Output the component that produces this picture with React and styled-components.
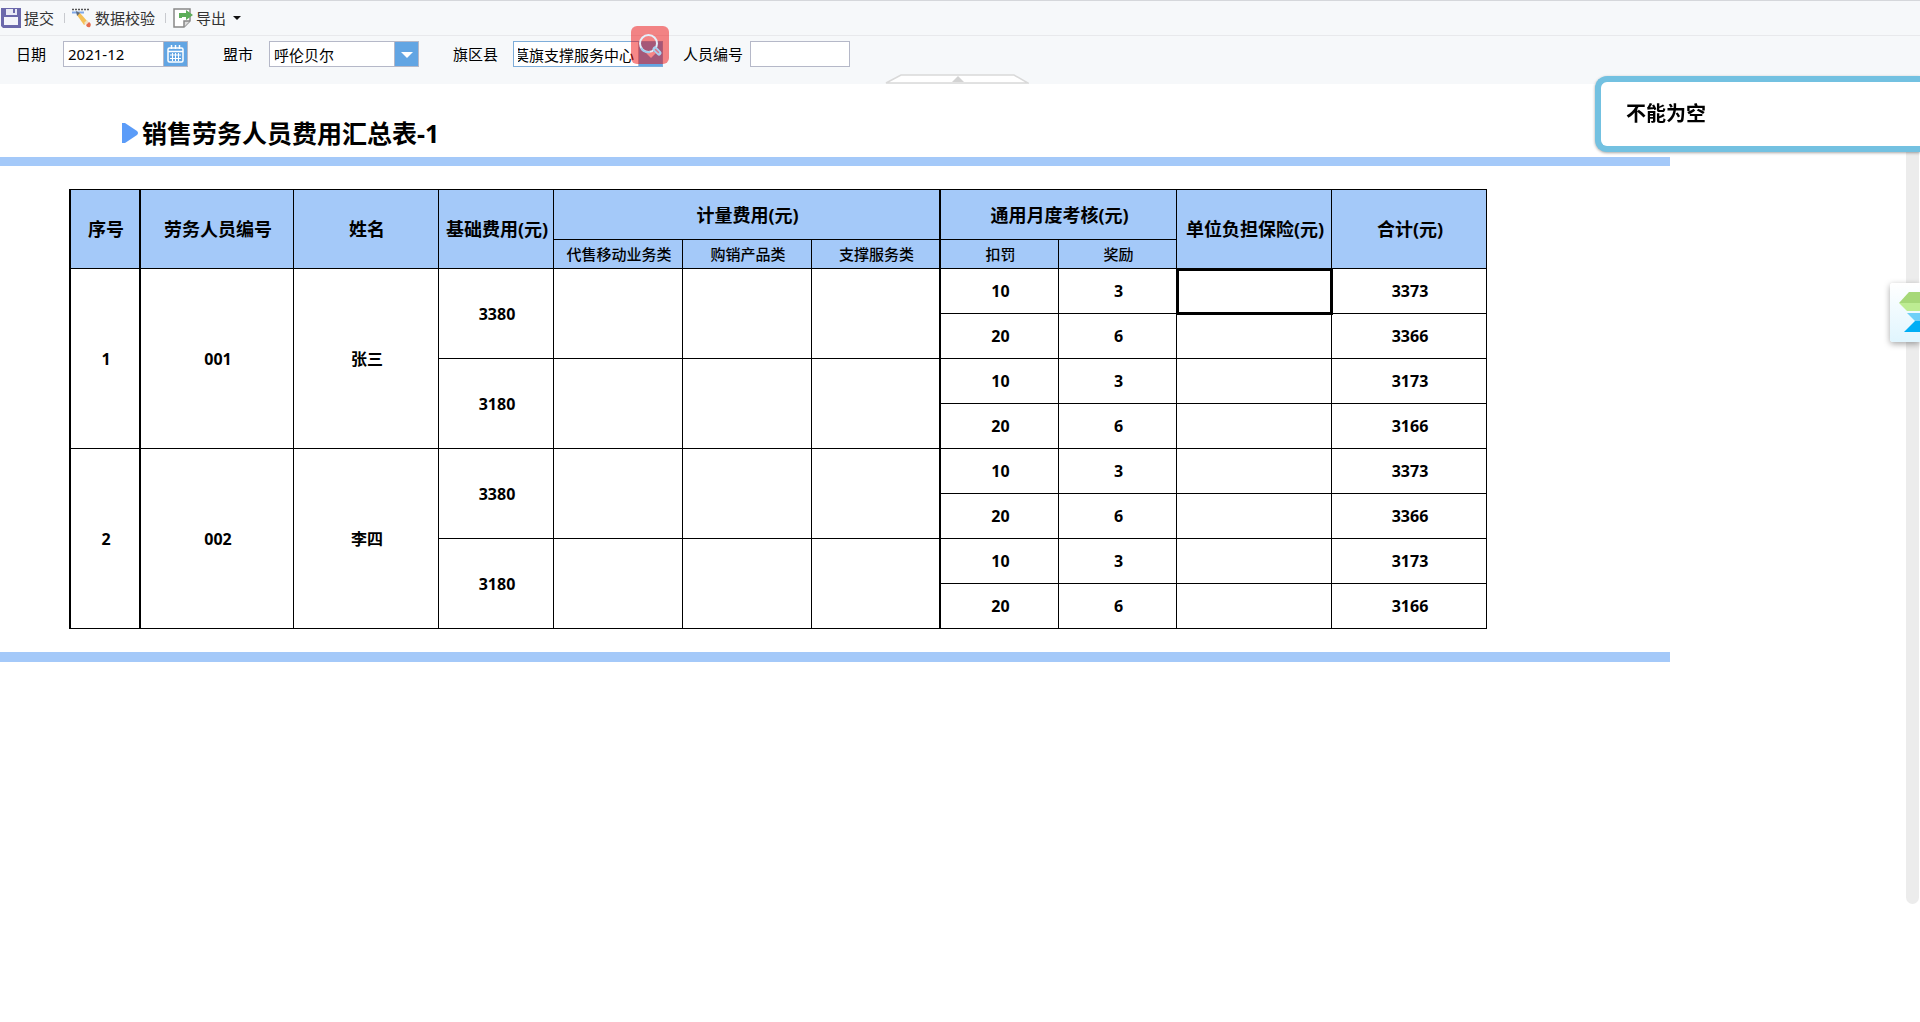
import React, { useEffect, useRef, useState } from 'react';
import styled, { createGlobalStyle } from 'styled-components';

const GlobalStyle = createGlobalStyle`
  * {
    box-sizing: border-box;
  }

  body {
    margin: 0;
    background: #fff;
    color: #000;
    font-family: 'Noto Sans', 'Noto Sans CJK SC', sans-serif;
    font-size: 15px;
    overflow: hidden;
  }

  button,
  input {
    font: inherit;
    color: inherit;
  }
`;

const Page = styled.div`
  display: flex;
  flex-direction: column;
  min-height: 100vh;
`;

const Toolbar = styled.div`
  display: flex;
  align-items: center;
  height: 36px;
  background: #f6f8fa;
  border-top: 1px solid #d5d7db;
  border-bottom: 1px solid #e8e9ec;
`;

const ToolButton = styled.button`
  display: flex;
  align-items: center;
  gap: 3px;
  padding: 0 10px 0 1px;
  border: none;
  background: none;
  color: #333;
  line-height: 20px;
  cursor: pointer;
`;

const Separator = styled.span`
  width: 1px;
  height: 10px;
  margin-right: 6px;
  background: #c8cacf;
`;

const Caret = styled.span`
  margin-left: 4px;
  border: 4px solid transparent;
  border-top-color: #111;
  border-bottom: none;
`;

const FilterPanel = styled.form`
  position: relative;
  display: flex;
  align-items: flex-start;
  height: 48px;
  padding: 5px 0 0 16px;
  background: #f6f8fa;
`;

const Field = styled.div`
  display: flex;
  align-items: center;
  margin-right: ${props => props.$gap || 0}px;
`;

const FieldLabel = styled.label`
  margin-right: ${props => props.$gap}px;
  line-height: 26px;
  white-space: nowrap;
`;

const InputBox = styled.div`
  position: relative;
  display: flex;
  width: ${props => props.$width}px;
  height: 26px;
  border: 1px solid ${props => (props.$active ? '#7eadd9' : '#b5b8c8')};
  background: #fff;
`;

const TextInput = styled.input`
  flex: 1;
  min-width: 0;
  margin: 0 4px;
  padding: 0;
  border: none;
  outline: none;
  background: none;
`;

const Trigger = styled.button`
  display: flex;
  align-items: center;
  justify-content: center;
  width: 24px;
  padding: 0;
  border: none;
  border-left: 1px solid #b5b8c8;
  background: #62a5e3;
  cursor: pointer;
`;

const SearchBadge = styled.button`
  position: absolute;
  top: -16px;
  right: -7px;
  width: 38px;
  height: 38px;
  padding: 0;
  border: none;
  border-radius: 6px;
  background: rgba(238, 5, 5, 0.48);
  cursor: pointer;
`;

const CollapseHandle = styled.button`
  position: absolute;
  bottom: 0;
  left: calc(46% + 2px);
  width: 144px;
  height: 10px;
  padding: 0;
  border: none;
  background: none;
  cursor: pointer;

  svg {
    display: block;
  }
`;

const Content = styled.div`
  display: flex;
  flex: 1;
`;

const Sheet = styled.main`
  flex: 1;
  min-width: 0;
`;

const ReportHeader = styled.header`
  display: flex;
  align-items: center;
  gap: 4px;
  height: 73px;
  padding: 24px 0 0 121px;

  svg {
    flex: none;
  }
`;

const Title = styled.h1`
  margin: 0;
  font-size: 25px;
  line-height: 36px;
  font-weight: 700;
`;

const Band = styled.div`
  margin-right: 236px;
  height: ${props => props.$height}px;
  background: #a4c9f9;
`;

const Table = styled.table`
  margin: 23px 0 23px 69px;
  border-collapse: separate;
  border-spacing: 0;
  border-top: 1px solid #000;
  border-left: 2px solid #000;
  table-layout: fixed;
  width: 1418px;
`;

const Cell = styled.td`
  height: ${props => props.$height || 45}px;
  padding: 0 0 0 2px;
  border-right: ${props => (props.$thick ? 2 : 1)}px solid #000;
  border-bottom: 1px solid #000;
  text-align: center;
  font-size: 16px;
  font-weight: 700;
  line-height: 22px;
  white-space: nowrap;
  outline: ${props => (props.$selected ? '3px solid #000' : 'none')};
  outline-offset: -2px;
`;

const HeadCell = styled(Cell)`
  background: #a4c9f9;
  font-size: ${props => (props.$sub ? 15 : 18)}px;
  font-weight: ${props => (props.$sub ? 500 : 700)};
  line-height: 24px;
`;

const ScrollTrack = styled.div`
  width: 13px;
  margin: 0 1px 118px 0;
  border-radius: 7px;
  background: #ececec;
`;

const Toast = styled.div`
  position: fixed;
  top: 76px;
  right: 0;
  width: 325px;
  padding: 18px 25px;
  border: 6px solid #73c1e1;
  border-right: none;
  border-radius: 12px 0 0 12px;
  background: #fff;
  box-shadow: 0 1px 3px rgba(0, 0, 0, 0.35);
  font-size: 20px;
  line-height: 28px;
  font-weight: 700;
`;

const SideWidget = styled.button`
  position: fixed;
  top: 283px;
  right: 0;
  width: 30px;
  height: 59px;
  padding: 0;
  border: none;
  border-radius: 3px 0 0 3px;
  background: linear-gradient(#fff, #e0f5fe);
  box-shadow: 0 2px 6px rgba(0, 0, 0, 0.35);
  cursor: pointer;

  svg {
    display: block;
  }
`;

const SaveIcon = () => (
  <svg width="20" height="20" viewBox="0 0 20 20">
    <path d="M0 0h20v20H2l-2-2z" fill="#6b68ab" />
    <path d="M5 1h11v6H5z" fill="#e9eaf5" />
    <path d="M12 1h2v4h-2z" fill="#6b68ab" />
    <path d="M3 9h14v8H3z" fill="#f3f4fa" />
  </svg>
);

const CheckIcon = () => (
  <svg width="20" height="20" viewBox="0 0 20 20">
    <path d="M0 1.5h18" stroke="#555" strokeWidth="1.5" strokeDasharray="2 1" />
    <path d="M0 4.5h12" stroke="#7fa8e8" strokeWidth="2" />
    <path d="M5 4l3 1 8 9-4 3-7-10z" fill="#f5c056" />
    <path d="M4 3l4 2-3 3z" fill="#5c6b80" />
    <path d="M12 15l3-3 1.500 2-3 2.500z" fill="#f2e2c4" />
    <path d="M14 17l3-3q3 2 1 5-3 1-4-2z" fill="#e66a4c" />
  </svg>
);

const ExportIcon = () => (
  <svg width="20" height="20" viewBox="0 0 20 20">
    <path d="M1 1h16v12l-6 6H1z" fill="#fff" stroke="#888" strokeWidth="1.500" />
    <path d="M11 19v-6h6" fill="#ddd" stroke="#888" strokeWidth="1.500" />
    <path d="M6 10V5h7V2l7 5-7 5V9H9v1z" fill="#5dae5a" />
  </svg>
);

const CalendarIcon = () => (
  <svg width="17" height="18" viewBox="0 0 17 18" fill="none" stroke="#fff">
    <rect x="1" y="3" width="15" height="14" rx="1.500" strokeWidth="1.500" />
    <path d="M1 6.500h15" strokeWidth="1.500" />
    <path d="M4.500 0v4M8.500 0v4M12.500 0v4" strokeWidth="1.500" />
    <path d="M3 10h11M3 13.500h11M5.500 8v8M8.500 8v8M11.500 8v8" />
  </svg>
);

const DownIcon = () => (
  <svg width="12" height="8" viewBox="0 0 12 8">
    <path d="M0 2h12L6 8z" fill="#fff" />
  </svg>
);

const SearchIcon = () => (
  <svg width="38" height="38" viewBox="0 0 38 38" fill="none">
    <circle cx="17.500" cy="17.500" r="8.500" stroke="#e3effa" strokeWidth="2" />
    <path d="M10 22q3 5 9 4" stroke="#9fcdee" strokeWidth="2" />
    <path d="M24 23l4 4" stroke="#a9d2ef" strokeWidth="5" strokeLinecap="round" />
    <path d="M24.500 23.500l3 3" stroke="#d8788c" strokeWidth="1.500" strokeLinecap="round" />
  </svg>
);

const columns = [70, 153, 145, 115, 129, 129, 129, 118, 118, 155, 155];

const people = [
  { no: 1, code: '001', name: '张三' },
  { no: 2, code: '002', name: '李四' },
];

const detailRows = [
  { base: 3380, deduct: 10, reward: 3, total: 3373 },
  { deduct: 20, reward: 6, total: 3366 },
  { base: 3180, deduct: 10, reward: 3, total: 3173 },
  { deduct: 20, reward: 6, total: 3166 },
];

const FilterBar = () => {
  const [month, setMonth] = useState('2021-12');
  const [city, setCity] = useState('呼伦贝尔');
  const [county, setCounty] = useState('莫旗支撑服务中心');
  const [staffNo, setStaffNo] = useState('');
  const countyRef = useRef(null);

  // keep the end of a long county name in view
  useEffect(() => {
    countyRef.current.scrollLeft = countyRef.current.scrollWidth;
  }, [county]);

  return (
    <FilterPanel onSubmit={e => e.preventDefault()}>
      <Field $gap={35}>
        <FieldLabel htmlFor="month" $gap={17}>日期</FieldLabel>
        <InputBox $width={125}>
          <TextInput id="month" value={month} onChange={e => setMonth(e.target.value)} />
          <Trigger type="button" aria-label="选择日期"><CalendarIcon /></Trigger>
        </InputBox>
      </Field>
      <Field $gap={34}>
        <FieldLabel htmlFor="city" $gap={16}>盟市</FieldLabel>
        <InputBox $width={150}>
          <TextInput id="city" value={city} onChange={e => setCity(e.target.value)} />
          <Trigger type="button" aria-label="选择盟市"><DownIcon /></Trigger>
        </InputBox>
      </Field>
      <Field $gap={20}>
        <FieldLabel htmlFor="county" $gap={15}>旗区县</FieldLabel>
        <InputBox $width={150} $active>
          <TextInput id="county" ref={countyRef} value={county} onChange={e => setCounty(e.target.value)} />
          <Trigger type="button" aria-label="选择旗区县"><DownIcon /></Trigger>
          <SearchBadge type="button" aria-label="搜索"><SearchIcon /></SearchBadge>
        </InputBox>
      </Field>
      <Field>
        <FieldLabel htmlFor="staffNo" $gap={7}>人员编号</FieldLabel>
        <InputBox $width={100}>
          <TextInput id="staffNo" value={staffNo} onChange={e => setStaffNo(e.target.value)} />
        </InputBox>
      </Field>
      <CollapseHandle type="button" aria-label="收起">
        <svg width="144" height="10" viewBox="0 0 144 10">
          <path d="M1 9L16 1h113l14 8z" fill="#fff" stroke="#d9d9d9" strokeWidth="1.500" />
          <path d="M67 8l6-6 6 6z" fill="#d3d3d3" />
        </svg>
      </CollapseHandle>
    </FilterPanel>
  );
};

const ReportTable = () => (
  <Table>
    <colgroup>
      {columns.map((width, index) => (
        <col key={index} style={{ width }} />
      ))}
    </colgroup>
    <thead>
      <tr>
        <HeadCell as="th" rowSpan={2} $thick>序号</HeadCell>
        <HeadCell as="th" rowSpan={2}>劳务人员编号</HeadCell>
        <HeadCell as="th" rowSpan={2}>姓名</HeadCell>
        <HeadCell as="th" rowSpan={2}>基础费用(元)</HeadCell>
        <HeadCell as="th" colSpan={3} $height={50} $thick>计量费用(元)</HeadCell>
        <HeadCell as="th" colSpan={2} $height={50}>通用月度考核(元)</HeadCell>
        <HeadCell as="th" rowSpan={2}>单位负担保险(元)</HeadCell>
        <HeadCell as="th" rowSpan={2}>合计(元)</HeadCell>
      </tr>
      <tr>
        <HeadCell as="th" $height={29} $sub>代售移动业务类</HeadCell>
        <HeadCell as="th" $height={29} $sub>购销产品类</HeadCell>
        <HeadCell as="th" $height={29} $sub $thick>支撑服务类</HeadCell>
        <HeadCell as="th" $height={29} $sub>扣罚</HeadCell>
        <HeadCell as="th" $height={29} $sub>奖励</HeadCell>
      </tr>
    </thead>
    <tbody>
      {people.map((person, personIndex) =>
        detailRows.map((row, rowIndex) => (
          <tr key={`${person.code}-${rowIndex}`}>
            {rowIndex === 0 && (
              <>
                <Cell rowSpan={4} $thick>{person.no}</Cell>
                <Cell rowSpan={4}>{person.code}</Cell>
                <Cell rowSpan={4}>{person.name}</Cell>
              </>
            )}
            {row.base && (
              <>
                <Cell rowSpan={2}>{row.base}</Cell>
                <Cell rowSpan={2} />
                <Cell rowSpan={2} />
                <Cell rowSpan={2} $thick />
              </>
            )}
            <Cell>{row.deduct}</Cell>
            <Cell>{row.reward}</Cell>
            <Cell $selected={personIndex === 0 && rowIndex === 0} />
            <Cell>{row.total}</Cell>
          </tr>
        ))
      )}
    </tbody>
  </Table>
);

const App = () => (
  <>
    <GlobalStyle />
    <Page>
      <Toolbar>
        <ToolButton type="button"><SaveIcon />提交</ToolButton>
        <Separator />
        <ToolButton type="button"><CheckIcon />数据校验</ToolButton>
        <Separator />
        <ToolButton type="button"><ExportIcon />导出<Caret /></ToolButton>
      </Toolbar>
      <FilterBar />
      <Content>
        <Sheet>
          <ReportHeader>
            <svg width="17" height="22" viewBox="0 0 17 22">
              <path d="M1 1h3l12 8q2 2 0 4L4 21H1z" fill="#5b9cf8" />
            </svg>
            <Title>销售劳务人员费用汇总表-1</Title>
          </ReportHeader>
          <Band $height={9} />
          <ReportTable />
          <Band $height={10} />
        </Sheet>
        <ScrollTrack />
      </Content>
    </Page>
    <Toast role="alert">不能为空</Toast>
    <SideWidget type="button" aria-label="助手">
      <svg width="30" height="59" viewBox="0 0 30 59">
        <path d="M19 9h11v11H9z" fill="#a6d878" />
        <path d="M9 20h21v8H17z" fill="#bdec92" />
        <path d="M17 30h13v8h-5z" fill="#6fd0f8" />
        <path d="M25 38h5v11H14z" fill="#00aef5" />
      </svg>
    </SideWidget>
  </>
);

export default App;
